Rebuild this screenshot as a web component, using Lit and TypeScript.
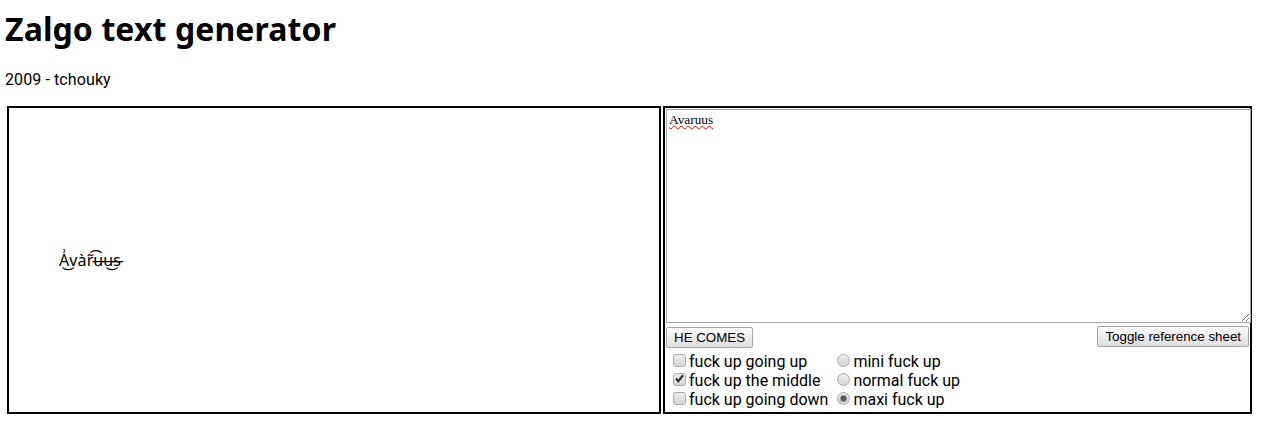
import { LitElement, html, css } from "lit";
import { customElement } from "lit/decorators.js";

@customElement("app-root")
export class AppRoot extends LitElement {
  static styles = css`
    :host { display: block; font-family: Roboto, "Noto Sans", sans-serif; font-size: 16px; color: #000; padding: 0 5px; }
    h1 { font-family: "Noto Sans", sans-serif; font-size: 32px; line-height: 36px; font-weight: 700; margin: 0; padding-top: 11px; letter-spacing: 0.1px; }
    .by { margin: 23px 0 0; line-height: 20px; height: 20px; letter-spacing: 0.1px; }
    .tb { display: grid; grid-template-columns: 654px 589px; column-gap: 2px; margin: 16px 0 0 2px; width: 1245px; height: 308px; }
    .cell { border: 2px solid #000; box-sizing: border-box; min-width: 0; }
    .left { display: flex; align-items: center; padding-left: 50px; }
    .zalgo { font-size: 16px; line-height: 20px; margin-top: 0; white-space: nowrap; font-family: "Noto Sans", "DejaVu Sans", sans-serif; letter-spacing: 0.1px; }
    .right { display: flex; flex-direction: column; padding: 0 0 0 1px; }
    .ta-wrap { position: relative; height: 214px; margin-top: 1px; width: 585px; }
    textarea { box-sizing: border-box; display: block; width: 100%; height: 100%; margin: 0; border: 1px solid #a9a9a9; outline: 0; padding: 2px; font: 13.33px/15px "Liberation Serif", serif; resize: both; background: #fff; color: #000; }
    .squiggle { position: absolute; left: 3px; top: 3px; font: 13.33px/15px "Liberation Serif", serif; color: transparent; text-decoration: underline wavy #e00; text-decoration-thickness: 1px; text-underline-offset: 1px; pointer-events: none; }
    .bar { display: flex; justify-content: space-between; align-items: flex-start; margin-top: 3px; height: 21px; padding-right: 1px; }
    button { box-sizing: border-box; height: 21px; margin: 0; padding: 0 7px; font: 13.33px "Liberation Sans", Arial, sans-serif; color: #000; border: 1px solid #a6a6a6; border-radius: 2px; background: linear-gradient(#fbfbfb, #dedede); white-space: nowrap; }
    .he { margin-top: 1px; }
    .opts { display: flex; gap: 9px; padding: 5px 0 0 7px; font-size: 16px; }
    .col { display: flex; flex-direction: column; }
    label { display: flex; align-items: center; height: 19px; white-space: nowrap; gap: 3px; }
    input { appearance: none; margin: 0 0 2px; width: 13px; height: 13px; flex: none; box-sizing: border-box; border: 1px solid #a9a9a9; background: linear-gradient(#ededed, #d6d6d6); position: relative; }
    input[type=checkbox] { border-radius: 3px; }
    input[type=radio] { border-radius: 50%; }
    input[type=radio]:checked::after { content: ""; position: absolute; left: 3px; top: 3px; width: 5px; height: 5px; border-radius: 50%; background: #555; box-shadow: 0 0 1px 1px #888; }
    .tick { position: absolute; left: 1px; top: 0; width: 11px; height: 11px; pointer-events: none; }
    .cb { position: relative; display: flex; flex: none; }
  `;

  render() {
    const zalgo = "A\u0357\u035Cva\u0300r\u0361\u0342u\u0336u\u0336\u035Cs\u0336\u0335";
    const cb = (t: string, c = false) => html`<label><span class="cb"><input type="checkbox" ?checked=${c} />${c
      ? html`<svg class="tick" viewBox="0 0 11 11"><path d="M2 5.5 4.3 8.2 9 2.2" fill="none" stroke="#333" stroke-width="2.2" /></svg>`
      : ""}</span>${t}</label>`;
    const rd = (t: string, c = false) => html`<label><input type="radio" name="m" ?checked=${c} />${t}</label>`;
    return html`
      <h1>Zalgo text generator</h1>
      <p class="by">2009 - tchouky</p>
      <div class="tb">
        <div class="cell left"><div class="zalgo">${zalgo}</div></div>
        <div class="cell right">
          <div class="ta-wrap">
            <textarea spellcheck="false" .value=${"Avaruus"}></textarea>
            <span class="squiggle">Avaruus</span>
          </div>
          <div class="bar">
            <button class="he">HE COMES</button>
            <button>Toggle reference sheet</button>
          </div>
          <div class="opts">
            <div class="col">${cb("fuck up going up")}${cb("fuck up the middle", true)}${cb("fuck up going down")}</div>
            <div class="col">${rd("mini fuck up")}${rd("normal fuck up")}${rd("maxi fuck up", true)}</div>
          </div>
        </div>
      </div>
    `;
  }
}
